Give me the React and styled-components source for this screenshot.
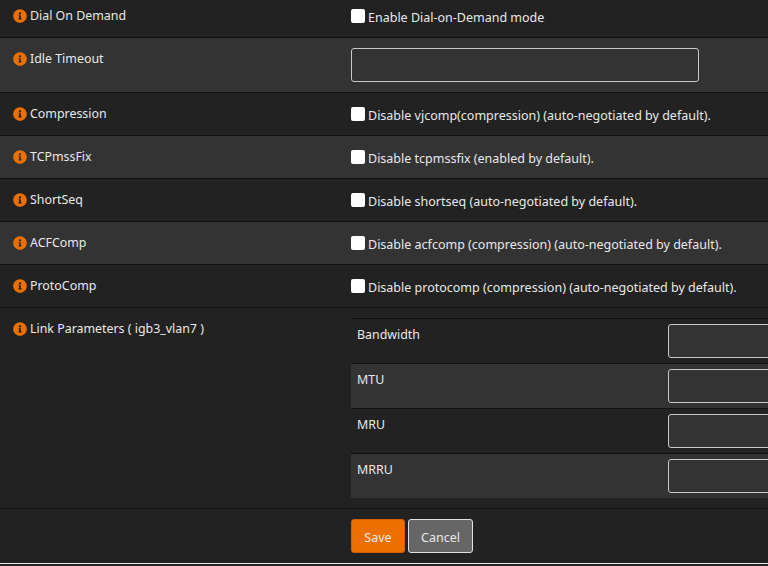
import React from 'react';
import styled, { createGlobalStyle } from 'styled-components';
import { FaInfoCircle } from 'react-icons/fa';

const GlobalStyle = createGlobalStyle`
  html, body {
    margin: 0;
    padding: 0;
    height: 566px;
    overflow: hidden;
    background: #222222;
  }
  body {
    font-family: "Noto Sans", "Open Sans", sans-serif;
    font-size: 12.4px;
    color: #e8e8e8;
  }
`;

const Form = styled.div`
  width: 768px;
  margin-top: -5px;
  overflow: hidden;
`;

const Row = styled.div`
  display: grid;
  grid-template-columns: 343px 1fr;
  min-height: ${p => p.$height}px;
  box-sizing: border-box;
  background: ${p => (p.$alt ? '#333333' : '#222222')};
  border-bottom: 1px solid #111111;
`;

const LabelCell = styled.div`
  display: flex;
  align-items: flex-start;
  gap: 3px;
  padding: 13px 0 0 13px;
  line-height: 16px;
`;

const InfoIcon = styled(FaInfoCircle)`
  width: 14px;
  height: 14px;
  margin-top: 1px;
  color: #ec7000;
  flex: none;
`;

const ValueCell = styled.div`
  padding: 0 0 0 8px;
  display: flex;
  align-items: ${p => (p.$top ? 'flex-start' : 'center')};
  min-width: 0;
`;

const CheckLabel = styled.label`
  display: flex;
  align-items: center;
  gap: 3px;
  font-size: 12.5px;
  line-height: 16px;
`;

const CheckText = styled.span`
  padding-top: 4px;
`;

const Checkbox = styled.input.attrs({ type: 'checkbox' })`
  appearance: none;
  width: 14px;
  height: 14px;
  margin: 0;
  background: #ffffff;
  border-radius: 2px;
`;

const TextInput = styled.input.attrs({ type: 'text' })`
  box-sizing: border-box;
  width: ${p => p.$width}px;
  height: 34px;
  flex: none;
  background: #333333;
  border: 1px solid #c8c8c8;
  border-radius: 3px;
  outline: none;
`;

const Nested = styled.div`
  margin-top: 10px;
  width: 100%;
  border-top: 1px solid #111111;
`;

const NestedRow = styled.div`
  display: grid;
  grid-template-columns: 317px 1fr;
  box-sizing: border-box;
  height: ${p => (p.$last ? 44 : 45)}px;
  padding-top: 5px;
  background: ${p => (p.$alt ? '#333333' : '#222222')};
  border-bottom: ${p => (p.$last ? 'none' : '1px solid #111111')};
`;

const NestedLabel = styled.div`
  padding: 3px 0 0 6px;
  line-height: 16px;
`;

const Footer = styled.div`
  display: flex;
  gap: 3px;
  height: 55px;
  box-sizing: border-box;
  padding: 10px 0 0 351px;
  border-bottom: 1px solid #e8e8e8;
`;

const Button = styled.button`
  box-sizing: border-box;
  height: 34px;
  width: ${p => p.$width}px;
  padding: 2px 0 0;
  font: inherit;
  font-size: 12.5px;
  color: #e8e8e8;
  border-radius: 3px;
  background: ${p => (p.$primary ? '#ec7000' : '#666666')};
  border: 1px solid ${p => (p.$primary ? '#d45f00' : '#e0e0e0')};
`;

const checkRows = [
  { label: 'Compression', text: 'Disable vjcomp(compression) (auto-negotiated by default).' },
  { label: 'TCPmssFix', text: 'Disable tcpmssfix (enabled by default).', alt: true },
  { label: 'ShortSeq', text: 'Disable shortseq (auto-negotiated by default).' },
  { label: 'ACFComp', text: 'Disable acfcomp (compression) (auto-negotiated by default).', alt: true },
  { label: 'ProtoComp', text: 'Disable protocomp (compression) (auto-negotiated by default).' },
];

const linkParams = ['Bandwidth', 'MTU', 'MRU', 'MRRU'];

function Label({ children }) {
  return (
    <LabelCell>
      <InfoIcon />
      <span>{children}</span>
    </LabelCell>
  );
}

export default function App() {
  return (
    <>
      <GlobalStyle />
      <Form>
        <Row $height={43}>
          <Label>Dial On Demand</Label>
          <ValueCell>
            <CheckLabel><Checkbox /><CheckText>Enable Dial-on-Demand mode</CheckText></CheckLabel>
          </ValueCell>
        </Row>
        <Row $height={55} $alt>
          <Label>Idle Timeout</Label>
          <ValueCell><TextInput $width={348} /></ValueCell>
        </Row>
        {checkRows.map(r => (
          <Row key={r.label} $height={43} $alt={r.alt}>
            <Label>{r.label}</Label>
            <ValueCell>
              <CheckLabel><Checkbox /><CheckText>{r.text}</CheckText></CheckLabel>
            </ValueCell>
          </Row>
        ))}
        <Row $height={201}>
          <Label>Link Parameters ( igb3_vlan7 )</Label>
          <ValueCell $top>
            <Nested>
              {linkParams.map((name, i) => (
                <NestedRow key={name} $alt={i % 2 === 1} $last={i === 3}>
                  <NestedLabel>{name}</NestedLabel>
                  <TextInput $width={200} />
                </NestedRow>
              ))}
            </Nested>
          </ValueCell>
        </Row>
        <Footer>
          <Button $primary $width={54}>Save</Button>
          <Button $width={65}>Cancel</Button>
        </Footer>
      </Form>
    </>
  );
}
